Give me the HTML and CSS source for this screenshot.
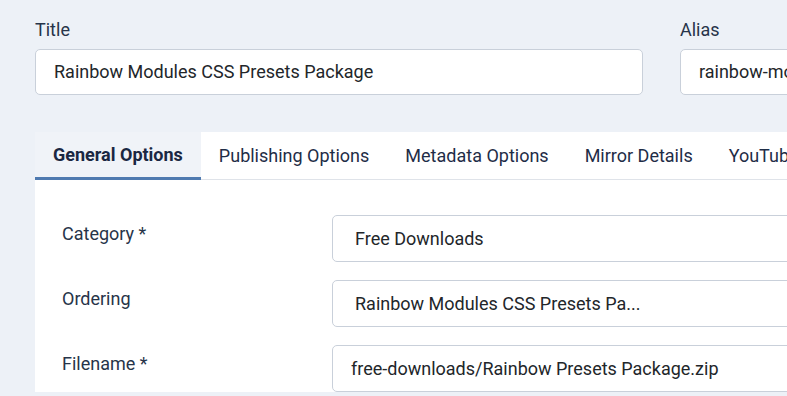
FILE: index.html
```html
<!DOCTYPE html>
<html lang="en">
<head>
  <meta charset="UTF-8" />
  <title>Edit Download</title>
  <link rel="stylesheet" href="styles.css">
</head>
<body>

  <div class="top-row">
    <div class="field title-field">
      <label>Title</label>
      <div class="input">Rainbow Modules CSS Presets Package</div>
    </div>
    <div class="field alias-field">
      <label>Alias</label>
      <div class="input">rainbow-modules-css-presets-package</div>
    </div>
  </div>

  <div class="tabs">
    <div class="tab-bar">
      <div class="tab active">General Options</div>
      <div class="tab">Publishing Options</div>
      <div class="tab">Metadata Options</div>
      <div class="tab">Mirror Details</div>
      <div class="tab">YouTube Video</div>
    </div>

    <div class="tab-content">
      <div class="row">
        <div class="row-label">Category *</div>
        <div class="input select">Free Downloads</div>
      </div>
      <div class="row">
        <div class="row-label">Ordering</div>
        <div class="input select">Rainbow Modules CSS Presets Pa...</div>
      </div>
      <div class="row">
        <div class="row-label">Filename *</div>
        <div class="input">free-downloads/Rainbow Presets Package.zip</div>
      </div>
    </div>
  </div>

</body>
</html>
```

FILE: styles.css
```css
body {
  font-family: Roboto, 'Liberation Sans', sans-serif;
  background-color: #edf1f7;
  margin: 0;
  padding: 19px 0 0 35px;
  overflow: hidden;
  height: 396px;
  box-sizing: border-box;
  color: #22262a;
}

.top-row {
  display: flex;
  gap: 37px;
  white-space: nowrap;
}

.field label {
  display: block;
  font-size: 18px;
  line-height: 21px;
  color: #273449;
  margin-bottom: 9px;
}

.title-field {
  width: 608px;
  flex-shrink: 0;
}

.alias-field {
  width: 400px;
  flex-shrink: 0;
}

.input {
  height: 46px;
  box-sizing: border-box;
  background-color: #fff;
  border: 1px solid #c9d0da;
  border-radius: 5px;
  padding: 0 18px;
  font-size: 18px;
  line-height: 44px;
  color: #22262a;
  white-space: nowrap;
  overflow: hidden;
}

.tabs {
  margin-top: 37px;
  background-color: #fff;
  width: 900px;
}

.tab-bar {
  display: flex;
  border-bottom: 1px solid #dfe3e9;
  height: 47px;
}

.tab {
  padding: 0 18px;
  font-size: 18px;
  line-height: 47px;
  color: #1f2d47;
  white-space: nowrap;
}

.tab.active {
  background-color: #f0f3f8;
  font-weight: bold;
  color: #1a2742;
  border-bottom: 3px solid #4f7ab0;
  line-height: 45px;
  height: 45px;
}

.tab-content {
  padding: 35px 0 0 27px;
}

.row {
  display: flex;
  align-items: center;
  margin-bottom: 18px;
}

.row-label {
  width: 270px;
  font-size: 18px;
  color: #273449;
  margin-top: -10px;
}

.row .input {
  width: 560px;
  height: 47px;
  line-height: 45px;
  padding-left: 18px;
}

.row .select {
  padding-left: 22px;
}
```
